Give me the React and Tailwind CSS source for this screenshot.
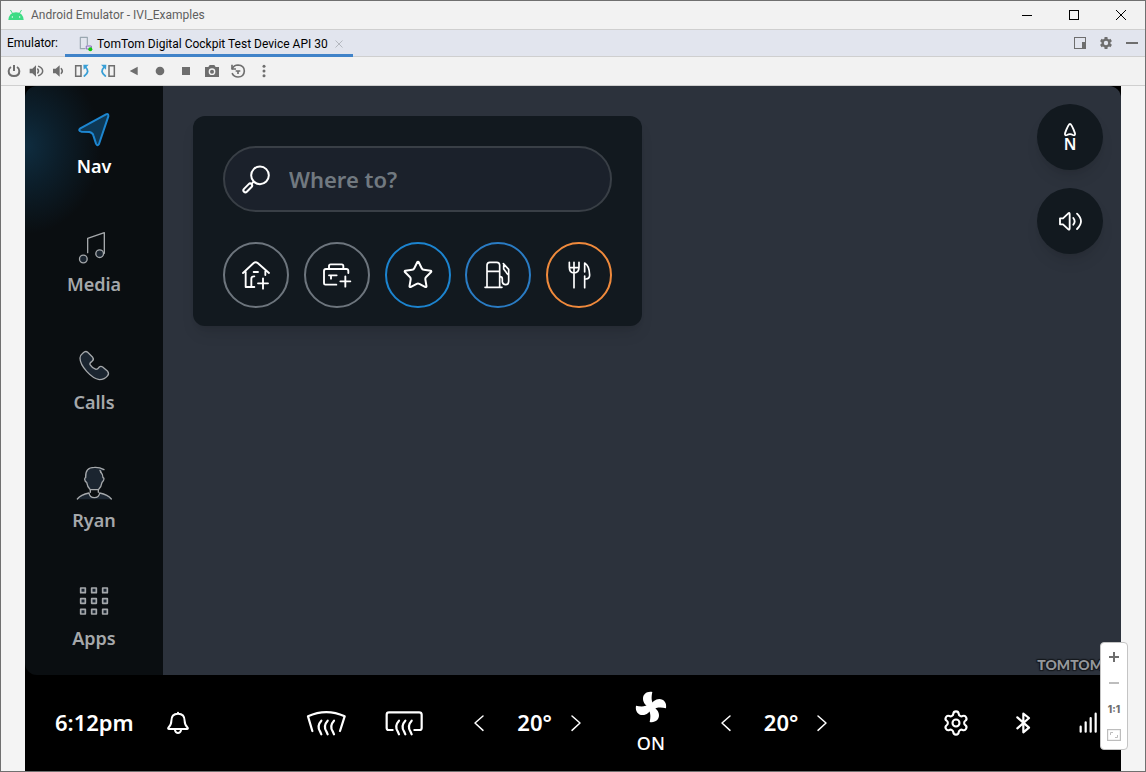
import React from "react";
import { Settings, Star } from "lucide-react";

function Icon({ box, className, stroke = 5, color = "currentColor", fill = "none", children }) {
  return (
    <svg
      viewBox={box}
      className={className}
      fill={fill}
      stroke={color}
      strokeWidth={stroke}
      strokeLinecap="round"
      strokeLinejoin="round"
      aria-hidden="true"
    >
      {children}
    </svg>
  );
}

const navItems = [
  {
    label: "Nav",
    active: true,
    icon: (
      <Icon box="162 75 120 120" className="size-10" stroke={6} color="#1d86d0" fill="#0e3855">
        <path d="M258 91 L181 133 Q173 139 184 143 L208 144 Q218 146 220 154 L228 179 Q232 188 237 180 L265 97 Q266 87 258 91Z" />
      </Icon>
    ),
  },
  {
    label: "Media",
    icon: (
      <Icon box="162 429 120 120" className="size-10" stroke={4} fill="#1b2530">
        <path d="M203 506 V463 L253 446 V508" fill="none" />
        <circle cx="190" cy="525" r="11.5" />
        <circle cx="239" cy="509" r="11.5" />
      </Icon>
    ),
  },
  {
    label: "Calls",
    icon: (
      <Icon box="162 45 120 120" className="size-10" stroke={4} fill="#1b2530">
        <path d="M189 69 Q197 61 203 67 L218 82 Q223 88 216 94 Q208 99 210 104 Q216 114 228 118 Q233 118 237 112 Q242 107 248 111 L263 124 Q268 131 263 137 Q254 149 238 149 Q220 146 200 124 Q180 102 180 84 Q180 76 189 69Z" />
      </Icon>
    ),
  },
  {
    label: "Ryan",
    icon: (
      <Icon box="162 399 120 120" className="size-10" stroke={4} fill="#1b2530">
        <path d="M242 426 Q249 433 249 443 Q253 443 251 450 Q249 455 246 457 Q244 471 235 479 H211 Q202 471 200 457 Q195 455 194 448 Q194 443 197 443 Q195 412 223 412 Q238 411 252 419" />
        <path d="M172 508 Q182 494 207 489 Q209 503 223 503 Q237 503 239 489 Q264 494 274 508" stroke="none" />
        <path d="M172 507 Q182 494 207 489 Q209 503 223 503 Q237 503 239 489 Q264 494 274 507" fill="none" />
        <path d="M211 480 V487 M235 480 V487 M240 421 L243 427" />
      </Icon>
    ),
  },
  {
    label: "Apps",
    icon: (
      <Icon box="222 63 120 120" className="size-10" stroke={5} fill="#1b2530">
        {[91, 123, 155].map((y) =>
          [249, 282, 315].map((x) => <rect key={`${x}-${y}`} x={x - 7} y={y - 7} width="14" height="14" />)
        )}
      </Icon>
    ),
  },
];

const shortcuts = [
  {
    label: "Add home",
    ring: "border-[#6d757d]",
    icon: (
      <Icon box="153 449 120 120" className="size-10" stroke={5.6}>
        <path d="M174 503 L206 473 Q212 468 218 473 L252 503 M182 500 V545 H208 M199 545 V520 Q199 513 208 513 M206 500 H219 M241 498 V509" />
        <path d="M219 534 H249 M234 519 V550" />
      </Icon>
    ),
  },
  {
    label: "Add work",
    ring: "border-[#6d757d]",
    icon: (
      <Icon box="396 449 120 120" className="size-10" stroke={5.6}>
        <path d="M432 489 V482 Q432 477 437 477 H470 Q475 477 475 482 V489 M454 538 H421 Q417 538 417 534 V497 Q417 491 423 491 H484 Q490 491 490 497 V503 M432 510 H455 M438 511 V520" />
        <path d="M466 528 H496 M481 513 V544" />
      </Icon>
    ),
  },
  {
    label: "Favourites",
    ring: "border-[#1c84cf]",
    icon: <Star className="size-8" strokeWidth={1.5} aria-hidden="true" />,
  },
  {
    label: "Fuel stations",
    ring: "border-[#2a7cc4]",
    icon: (
      <Icon box="176 449 120 120" className="size-10" stroke={5}>
        <path d="M203 545 V480 Q203 471 212 471 H232 Q241 471 241 480 V545 M197 546 H248 M203 498 H241" />
        <path d="M242 514 Q249 514 249 521 V530 Q251 538 259 538 Q268 538 268 528 V492 L252 475 M253 481 V491 L260 500 Q262 505 267 508" />
      </Icon>
    ),
  },
  {
    label: "Restaurants",
    ring: "border-[#f08a3c]",
    icon: (
      <Icon box="418 449 120 120" className="size-10" stroke={5}>
        <path d="M449 471 V486 Q449 503 463 503 Q478 503 478 486 V471 M463 471 V547 M450 487 H477" />
        <path d="M495 547 V512 M495 500 V473 Q509 481 510 509 Q510 520 499 521" />
      </Icon>
    ),
  },
];

const toolbar = [
  {
    label: "Power",
    width: "w-[22px]",
    icon: (
      <Icon box="18 189 48 48" stroke={6}>
        <path d="M33 201 Q26 205 26 213 Q26 228 42 228 Q58 228 58 213 Q58 205 51 201 M42 195 V213" strokeLinecap="butt" />
      </Icon>
    ),
  },
  {
    label: "Volume up",
    width: "w-[22px]",
    icon: (
      <Icon box="85 189 48 48" stroke={4.5}>
        <path d="M90 206 H98 L109 196 V230 L98 220 H90Z" fill="currentColor" stroke="none" />
        <path d="M114 207 Q119 213 114 219 M117 199 Q129 204 129 213 Q129 222 117 227" />
      </Icon>
    ),
  },
  {
    label: "Volume down",
    width: "w-[22px]",
    icon: (
      <Icon box="150 189 48 48" stroke={4.5}>
        <path d="M159 206 H167 L179 196 V230 L167 220 H159Z" fill="currentColor" stroke="none" />
        <path d="M184 206 Q190 213 184 220" />
      </Icon>
    ),
  },
  {
    label: "Rotate left",
    width: "w-[26px]",
    icon: (
      <Icon box="222 189 48 48" stroke={4.5}>
        <path d="M227 197 H243 V229 H227Z" strokeLinejoin="miter" />
        <path d="M257 202 Q271 215 253 228" stroke="#389fd6" strokeWidth="5.5" />
        <path d="M250 194 H266 L251 209Z" fill="#389fd6" stroke="none" />
      </Icon>
    ),
  },
  {
    label: "Rotate right",
    width: "w-[26px]",
    icon: (
      <Icon box="300 189 48 48" stroke={4.5}>
        <path d="M327 197 H343 V229 H327Z" strokeLinejoin="miter" />
        <path d="M312 202 Q298 215 316 228" stroke="#389fd6" strokeWidth="5.5" />
        <path d="M319 194 H303 L318 209Z" fill="#389fd6" stroke="none" />
      </Icon>
    ),
  },
  {
    label: "Back",
    width: "w-[26px]",
    icon: (
      <Icon box="378 189 48 48" stroke={0} fill="currentColor">
        <path d="M389 213 L413 200 V226Z" />
      </Icon>
    ),
  },
  {
    label: "Home",
    width: "w-[26px]",
    icon: (
      <Icon box="456 189 48 48" stroke={0} fill="currentColor">
        <circle cx="480" cy="213" r="13" />
      </Icon>
    ),
  },
  {
    label: "Overview",
    width: "w-[26px]",
    icon: (
      <Icon box="534 189 48 48" stroke={0} fill="currentColor">
        <rect x="546" y="201" width="24" height="24" />
      </Icon>
    ),
  },
  {
    label: "Take screenshot",
    width: "w-[26px]",
    icon: (
      <Icon box="612 189 48 48" stroke={0} fill="currentColor">
        <path d="M615 201 H625 L629 195 H643 L647 201 H657 V231 H615Z" />
        <circle cx="636" cy="215" r="10" fill="#f2f2f2" />
        <circle cx="636" cy="215" r="6" />
      </Icon>
    ),
  },
  {
    label: "Snapshots",
    width: "w-[26px]",
    icon: (
      <Icon box="690 189 48 48" stroke={5}>
        <path d="M697 206 Q702 195 714 195 Q733 196 733 213 Q732 231 714 231 Q702 231 697 221" />
        <path d="M696 194 V207 H708 M707 213 H721 M714 213 V222" strokeLinecap="butt" />
      </Icon>
    ),
  },
  {
    label: "More",
    width: "w-[26px]",
    icon: (
      <Icon box="768 189 48 48" stroke={0} fill="currentColor">
        <circle cx="792" cy="199" r="4.5" />
        <circle cx="792" cy="213" r="4.5" />
        <circle cx="792" cy="227" r="4.5" />
      </Icon>
    ),
  },
];

function Chevron({ left }) {
  return (
    <Icon box="0 0 60 60" className="size-5" stroke={4.5}>
      <path d={left ? "M42 9 L18 30 L42 52" : "M18 9 L42 30 L18 52"} />
    </Icon>
  );
}

function Temperature({ side }) {
  return (
    <div className="flex items-center" role="group" aria-label={`${side} temperature`}>
      <button type="button" aria-label={`Lower ${side} temperature`}>
        <Chevron left />
      </button>
      <span className="pr-[14px] pb-[2px] pl-7 text-[22px] leading-8 font-semibold">20°</span>
      <button type="button" aria-label={`Raise ${side} temperature`}>
        <Chevron />
      </button>
    </div>
  );
}

function HeatWaves({ xs }) {
  return xs.map((x) => (
    <path key={x} d={`M${x} 122 C${x - 13} 136 ${x - 10} 146 ${x - 3} 156 L${x} 163`} />
  ));
}

function TitleBar() {
  return (
    <header className="flex h-[29px] items-center border-b border-[#cfcfcf] bg-[#f2f2f2] pr-px pl-[7px]">
      <Icon box="24 21 48 48" className="size-4" stroke={3} color="#3ddc84" fill="#3ddc84">
        <path d="M25 60 Q27 38 48 37 Q69 38 71 60Z" stroke="none" />
        <path d="M32 31 L38 41 M64 31 L58 41" />
        <circle cx="37" cy="51" r="2" fill="#fff" stroke="none" />
        <circle cx="59" cy="51" r="2" fill="#fff" stroke="none" />
      </Icon>
      <h1 className="flex-1 pl-[7px] text-[#5f5f5f]">Android Emulator - IVI_Examples</h1>
      <button type="button" aria-label="Minimize" className="flex h-full w-[47px] items-center justify-center">
        <svg viewBox="0 0 10 10" className="size-[10px]" stroke="#000" shapeRendering="crispEdges"><path d="M0 5.5 H10" /></svg>
      </button>
      <button type="button" aria-label="Maximize" className="flex h-full w-[47px] items-center justify-center">
        <svg viewBox="0 0 10 10" className="size-[10px]" fill="none" stroke="#000"><rect x="0.5" y="0.5" width="9" height="9" /></svg>
      </button>
      <button type="button" aria-label="Close" className="flex h-full w-[47px] items-center justify-center">
        <svg viewBox="0 0 10 10" className="size-[10px]" fill="none" stroke="#000"><path d="M0 0 L10 10 M10 0 L0 10" /></svg>
      </button>
    </header>
  );
}

function TabBar() {
  return (
    <div className="flex h-[27px] border-b border-[#cfcfcf] bg-[#e2e5ee] pl-[6px] text-black">
      <span className="flex w-[58px] items-center">Emulator:</span>
      <div className="-mb-px flex items-center border-b-3 border-[#4083c9] pt-[3px] pr-[10px] pl-[14px]">
        <Icon box="240 108 48 48" className="size-4" stroke={3.5} color="#9aa7b0">
          <path d="M258 146 H244 V112 H265 V134" />
          <path d="M263 138 H277 V147 H263Z" stroke="#8b6bbf" strokeWidth="3" />
          <circle cx="274" cy="148" r="6" fill="#10c810" stroke="none" />
        </Icon>
        <span className="pl-[2px]">TomTom Digital Cockpit Test Device API 30</span>
        <button type="button" aria-label="Close tab" className="ml-[7px]">
          <svg viewBox="0 0 8 8" className="size-2" stroke="#b4b8bf"><path d="M0.5 0.5 L7.5 7.5 M7.5 0.5 L0.5 7.5" /></svg>
        </button>
      </div>
      <div className="flex flex-1 justify-end text-[#6e6e6e]">
        <button type="button" aria-label="Window mode" className="flex w-[26px] items-center justify-center">
          <svg viewBox="0 0 12 12" className="size-3" fill="none" stroke="currentColor">
            <rect x="0.5" y="0.5" width="11" height="11" />
            <rect x="8" y="5" width="4" height="7" fill="currentColor" stroke="none" />
          </svg>
        </button>
        <button type="button" aria-label="Settings" className="flex w-[26px] items-center justify-center">
          <svg viewBox="-8 -8 16 16" className="size-4" fill="none" stroke="currentColor">
            <circle r="3.4" strokeWidth="2.4" />
            <path d="M0 -6 V-4 M0 6 V4 M5.2 -3 L3.5 -2 M5.2 3 L3.5 2 M-5.2 -3 L-3.5 -2 M-5.2 3 L-3.5 2" strokeWidth="3" />
          </svg>
        </button>
        <button type="button" aria-label="Hide" className="flex w-[26px] items-center justify-center">
          <svg viewBox="0 0 12 2" className="h-[2px] w-3" fill="currentColor"><rect width="12" height="2" /></svg>
        </button>
      </div>
    </div>
  );
}

function Toolbar() {
  return (
    <div className="flex h-[29px] border-b border-[#cfcfcf] bg-[#f2f2f2] pl-[2px] text-[#6e6e6e]" role="toolbar">
      {toolbar.map((t) => (
        <button key={t.label} type="button" aria-label={t.label} className={`flex ${t.width} items-center justify-center *:size-4`}>
          {t.icon}
        </button>
      ))}
    </div>
  );
}

function Sidebar() {
  return (
    <nav className="flex w-[138px] flex-col rounded-l-xl bg-[#0a0e11] bg-[radial-gradient(ellipse_76px_88px_at_0_60px,#0f2d40,#0c1e2a_45%,#0a0e11)]">
      {navItems.map((n) => (
        <a
          key={n.label}
          href={`#${n.label.toLowerCase()}`}
          className={`flex flex-1 flex-col items-center justify-center gap-[3px] text-lg leading-7 font-semibold ${n.active ? "text-white" : "text-[#a5a8ab]"}`}
        >
          {n.icon}
          {n.label}
        </a>
      ))}
    </nav>
  );
}

function SearchCard() {
  return (
    <section className="w-[449px] rounded-xl bg-[#12191f] px-[30px] pt-[30px] pb-[18px] shadow-lg">
      <label className="flex h-[66px] items-center gap-[17px] rounded-full border-2 border-[#393f46] bg-[#1b212b] px-[15px]">
        <Icon box="164 173 96 96" className="size-8 shrink-0 text-white" stroke={6}>
          <circle cx="224" cy="210" r="26.5" />
          <path d="M205 229 L200 234" />
          <rect x="-17" y="-6" width="32" height="12" rx="6" transform="translate(188 247) rotate(-45)" />
        </Icon>
        <input
          type="text"
          aria-label="Destination"
          placeholder="Where to?"
          className="w-full min-w-0 bg-transparent text-[22px] leading-8 font-semibold text-white outline-none placeholder:text-[#717980]"
        />
      </label>
      <div className="mt-[30px] flex justify-between text-white">
        {shortcuts.map((s) => (
          <button
            key={s.label}
            type="button"
            aria-label={s.label}
            className={`flex size-[66px] items-center justify-center rounded-full border-2 ${s.ring}`}
          >
            {s.icon}
          </button>
        ))}
      </div>
    </section>
  );
}

function MapView() {
  return (
    <main className="flex flex-1 items-start justify-between rounded-tr-xl bg-[#2c323c] pl-[30px]">
      <div className="pt-[30px]">
        <SearchCard />
      </div>
      <div className="flex h-full flex-col items-end gap-[18px] pt-[18px] pr-[18px] text-white">
        <button type="button" aria-label="Map orientation" className="flex size-[66px] items-center justify-center rounded-full bg-[#12191f] shadow-lg">
          <Icon box="90 98 120 120" className="size-10" stroke={5.5}>
            <path d="M150 119 Q145 119 135 147 Q134 155 141 152 Q150 147 159 152 Q166 155 165 147 Q155 119 150 119Z" />
            <text x="150" y="198" textAnchor="middle" fontSize="48" fontWeight="600" fill="currentColor" stroke="none">N</text>
          </Icon>
        </button>
        <button type="button" aria-label="Sound" className="flex size-[66px] items-center justify-center rounded-full bg-[#12191f] shadow-lg">
          <Icon box="90 350 120 120" className="size-10" stroke={5.5}>
            <path d="M120 402 H129 L145 387 Q149 384 149 390 V432 Q149 438 145 435 L129 420 H120Z M160 401 Q168 411 160 421 M171 388 Q195 411 171 434" />
          </Icon>
        </button>
        <span className="mt-auto font-[Lato] text-[14px] leading-5 font-black text-[#94979b] [text-shadow:1px_1px_1px_#15181d,-1px_-1px_1px_#15181d,1px_-1px_1px_#15181d,-1px_1px_1px_#15181d]">
          TOMTOM
        </span>
      </div>
    </main>
  );
}

function ClimateBar() {
  return (
    <footer className="flex h-24 items-center justify-between bg-black pr-[17px] pl-[30px] text-white">
      <div className="flex items-center gap-[30px]">
        <time className="pb-[2px] text-[22px] leading-8 font-semibold">6:12pm</time>
        <button type="button" aria-label="Notifications">
          <Icon box="493 448 84 84" className="size-7" stroke={6}>
            <path d="M508 508 Q504 508 506 504 Q515 496 515 484 Q515 462 535 462 Q555 462 555 484 Q555 496 564 504 Q566 508 562 508Z M526 512 Q528 520 535 520 Q542 520 544 512 M535 459 V461" />
          </Icon>
        </button>
      </div>
      <div className="flex items-center pl-[3px]">
        <button type="button" aria-label="Front defrost">
          <Icon box="45 81 132 96" className="h-8 w-11" stroke={6.6}>
            <path d="M70 153 L57 109 Q112 84 167 109 L153 153" />
            <HeatWaves xs={[97, 116, 135]} />
          </Icon>
        </button>
        <button type="button" aria-label="Rear defrost" className="ml-[34px]">
          <Icon box="280 81 132 96" className="h-8 w-11" stroke={6.6}>
            <path d="M312 150 H300 Q294 150 294 144 V104 Q294 97 301 97 H391 Q399 97 399 104 V144 Q399 150 393 150 H377" />
            <HeatWaves xs={[331, 350, 369]} />
          </Icon>
        </button>
        <div className="ml-[43px]">
          <Temperature side="left" />
        </div>
        <button type="button" className="mx-[49px] flex w-8 flex-col items-center gap-2 text-lg leading-6 font-medium">
          <Icon box="135 33 96 96" className="size-8" stroke={0} fill="currentColor">
            {[0, 90, 180, 270].map((a) => (
              <path
                key={a}
                transform={`rotate(${a} 183 81)`}
                d="M187 36 C171 33 159 42 159 56 C159 68 168 77 181 86 L192 76 C183 64 184 50 187 36Z"
              />
            ))}
          </Icon>
          ON
        </button>
        <Temperature side="right" />
      </div>
      <div className="flex items-center gap-[39px]">
        <button type="button" aria-label="Settings">
          <Settings className="size-7" strokeWidth={1.8} aria-hidden="true" />
        </button>
        <button type="button" aria-label="Bluetooth">
          <Icon box="261 237 84 84" className="size-7" stroke={6.6}>
            <path d="M286 262 L321 293 L304 307 V251 L321 264 L286 295" />
          </Icon>
        </button>
        <Icon box="468 237 84 84" className="size-7" stroke={6.6}>
          <path d="M482 305 V290 M497 305 V277 M512 305 V264 M527 305 V251" />
        </Icon>
      </div>
    </footer>
  );
}

function ZoomControls() {
  return (
    <div className="absolute right-[17px] bottom-[21px] flex w-7 flex-col rounded border border-[#c4c4c4] bg-white py-px text-[#6e6e6e] *:flex *:h-[26px] *:items-center *:justify-center">
      <button type="button" aria-label="Zoom in">
        <svg viewBox="0 0 10 10" className="size-[10px]" fill="currentColor"><path d="M4 0h2v4h4v2H6v4H4V6H0V4h4z" /></svg>
      </button>
      <button type="button" aria-label="Zoom out" className="text-[#bdbdbd]">
        <svg viewBox="0 0 10 2" className="h-[2px] w-[10px]" fill="currentColor"><rect width="10" height="2" /></svg>
      </button>
      <button type="button" className="font-[Inter] text-[10px] font-extrabold">1:1</button>
      <button type="button" aria-label="Fit to window" className="text-[#bdbdbd]">
        <svg viewBox="0 0 14 12" className="h-3 w-[14px]" fill="none" stroke="currentColor">
          <rect x="0.5" y="0.5" width="13" height="11" strokeWidth="1.4" />
          <path d="M3.5 6 V3.5 H6 M8 8.5 H10.5 V6" />
        </svg>
      </button>
    </div>
  );
}

export default function App() {
  return (
    <div className="flex min-h-screen flex-col border border-[#707070] bg-[#f4f4f4] font-['Noto_Sans',sans-serif]">
      <div className="font-[Roboto,'Noto_Sans',sans-serif] text-[12px]">
        <TitleBar />
        <TabBar />
        <Toolbar />
      </div>
      <div className="relative flex flex-1 px-6">
        <div className="flex flex-1 flex-col bg-black">
          <div className="flex flex-1">
            <Sidebar />
            <MapView />
          </div>
          <ClimateBar />
        </div>
        <ZoomControls />
      </div>
    </div>
  );
}
